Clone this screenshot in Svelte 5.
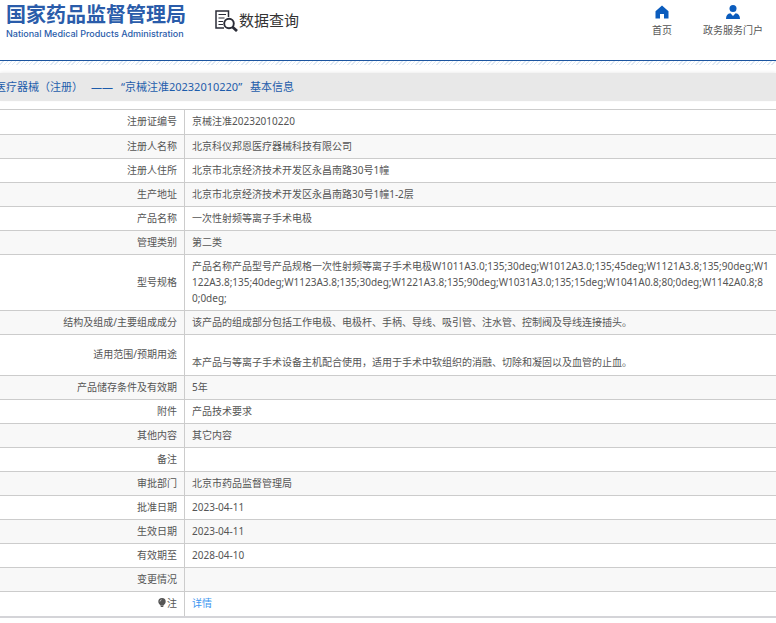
<script>
  const rows = [
    { label: '注册证编号', value: '京械注准20232010220', tall: true },
    { label: '注册人名称', value: '北京科仪邦恩医疗器械科技有限公司' },
    { label: '注册人住所', value: '北京市北京经济技术开发区永昌南路30号1幢' },
    { label: '生产地址', value: '北京市北京经济技术开发区永昌南路30号1幢1-2层' },
    { label: '产品名称', value: '一次性射频等离子手术电极' },
    { label: '管理类别', value: '第二类' },
    {
      label: '型号规格',
      value:
        '产品名称产品型号产品规格一次性射频等离子手术电极W1011A3.0;135;30deg;W1012A3.0;135;45deg;W1121A3.8;135;90deg;W1122A3.8;135;40deg;W1123A3.8;135;30deg;W1221A3.8;135;90deg;W1031A3.0;135;15deg;W1041A0.8;80;0deg;W1142A0.8;80;0deg;'
    },
    { label: '结构及组成/主要组成成分', value: '该产品的组成部分包括工作电极、电极杆、手柄、导线、吸引管、注水管、控制阀及导线连接插头。' },
    { label: '适用范围/预期用途', value: '\n本产品与等离子手术设备主机配合使用，适用于手术中软组织的消融、切除和凝固以及血管的止血。', tall: true },
    { label: '产品储存条件及有效期', value: '5年' },
    { label: '附件', value: '产品技术要求' },
    { label: '其他内容', value: '其它内容' },
    { label: '备注', value: '' },
    { label: '审批部门', value: '北京市药品监督管理局' },
    { label: '批准日期', value: '2023-04-11' },
    { label: '生效日期', value: '2023-04-11' },
    { label: '有效期至', value: '2028-04-10' },
    { label: '变更情况', value: '' },
    { label: '注', value: '详情', link: true, tall: true }
  ];
</script>

<header>
  <a class="brand" href="#home">
    <span class="cn">国家药品监督管理局</span>
    <span class="en">National Medical Products Administration</span>
  </a>
  <div class="search">
    <svg width="24" height="22" viewBox="0 0 24 22" fill="none" stroke="#2b2d38" aria-hidden="true">
      <path d="M13.5 7V1H1v17h8" stroke-width="1.5" />
      <path d="M3.5 4.5h7.500M3.500 8h6M3.500 11.500h4.500M3.500 14.500h4.500" stroke-width="1.200" />
      <circle cx="14" cy="13.500" r="4.800" stroke-width="1.900" />
      <path d="M17.500 17l4.500 4" stroke-width="2.800" />
    </svg>
    <span>数据查询</span>
  </div>
  <nav>
    <a href="#index">
      <svg width="14" height="14" viewBox="0 0 14 14" fill="#0b5cbd" aria-hidden="true">
        <path d="M7 0.500L13.500 6.300V13.500H9V9H5v4.500H0.500V6.300z" />
      </svg>
      <span>首页</span>
    </a>
    <a href="#portal">
      <svg width="14" height="14" viewBox="0 0 14 14" fill="#0b5cbd" aria-hidden="true">
        <circle cx="7" cy="3.600" r="3.500" />
        <path d="M0 14c0-3.600 1.500-5.300 4.400-5.800L7 11l2.600-2.800C12.500 8.700 14 10.400 14 14z" />
      </svg>
      <span>政务服务门户</span>
    </a>
  </nav>
</header>

<main>
  <h1>
    <span>医疗器械（注册）</span>
    <span>——</span>
    <span>“京械注准20232010220”</span>
    <span>基本信息</span>
  </h1>
  <table>
    <tbody>
      {#each rows as row}
        <tr class:tall={row.tall}>
          <th scope="row">
            {#if row.link}<svg width="8" height="10" viewBox="0 0 8 10" aria-hidden="true">
                <path d="M4 0a3.700 3.700 0 0 0-3.700 3.700C0.300 5.500 2 6.300 2.400 7.600h3.200C6 6.300 7.700 5.500 7.700 3.700A3.700 3.700 0 0 0 4 0z" fill="#555" />
                <path d="M2.700 7.500h2.600v1.500H2.700z" fill="#555" />
                <path d="M2 3.500Q2.200 2 3.600 1.700" fill="none" stroke="#ddd" stroke-width="0.800" />
              </svg>{/if}{row.label}
          </th>
          <td>
            {#if row.link}<a href="#detail">{row.value}</a>{:else}<span class="value">{row.value}</span>{/if}
          </td>
        </tr>
      {/each}
    </tbody>
  </table>
</main>

<style>
  :global(body) {
    background: #fff;
    color: #555;
    font: 10px/16px "Noto Sans", "Noto Sans CJK SC", sans-serif;
    overflow-x: hidden;
  }
  a {
    text-decoration: none;
    color: inherit;
  }
  header {
    display: flex;
    align-items: flex-start;
    height: 60px;
    border-bottom: 1px solid #1c55a0;
  }
  .brand {
    display: flex;
    flex-direction: column;
    gap: 2px;
    padding: 3px 0 0 6px;
    color: #2a5caa;
    white-space: nowrap;
  }
  .cn {
    font: bold 20px/22px "Noto Sans CJK SC", sans-serif;
  }
  .en {
    font: 500 9px/14px Inter, sans-serif;
  }
  .search {
    display: flex;
    align-items: flex-end;
    margin: 8px 0 0 29px;
    color: #333;
    font: 15px/24px "Noto Sans CJK SC", sans-serif;
  }
  nav {
    display: flex;
    gap: 31px;
    margin: 5px 13px 0 auto;
  }
  nav a {
    display: flex;
    flex-direction: column;
    align-items: center;
    gap: 3px;
  }
  main {
    overflow: hidden;
    padding-top: 12px;
    background: repeating-linear-gradient(135deg, #fff 0 2px, #dfe9f4 2px 3px) top / 100% 4px no-repeat;
  }
  h1 {
    display: flex;
    gap: 8px;
    margin: 0 0 8px;
    padding: 0;
    height: 28px;
    background: #e8e8e8;
    box-shadow: 0 -1px 3px #eee;
    color: #1d5cab;
    font: 11px/28px "Noto Sans", "Noto Sans CJK SC", sans-serif;
    white-space: nowrap;
  }
  h1 span:first-child {
    margin-left: -5px;
  }
  table {
    width: 100%;
    border-collapse: collapse;
    border-top: 1px solid #ccc;
    border-bottom: 2px solid #d4d4d8;
  }
  tr:nth-child(even) {
    background: #f8f8f8;
  }
  tr + tr {
    border-top: 1px solid #ccc;
  }
  th,
  td {
    padding: 3px 7px 4px;
    height: 16px;
    vertical-align: middle;
  }
  .tall th,
  .tall td {
    padding-bottom: 5px;
  }
  th {
    width: 170px;
    border-right: 1px solid #ccc;
    font-weight: normal;
    text-align: right;
  }
  th svg {
    vertical-align: -1px;
    margin-right: 1px;
  }
  .value {
    white-space: pre-line;
    word-break: break-all;
  }
  td a {
    color: #3c96f0;
  }
</style>
